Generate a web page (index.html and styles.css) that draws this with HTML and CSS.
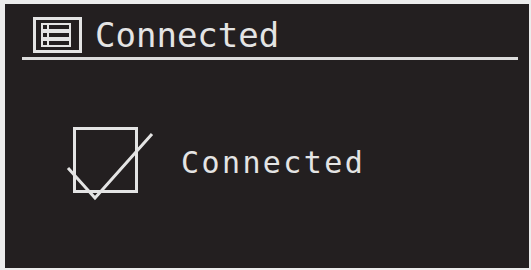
FILE: index.html
```html
<!DOCTYPE html>
<html>
<head>
<meta charset="utf-8">
<link rel="stylesheet" href="styles.css">
</head>
<body>
<div class="screen">
  <div class="header">
    <svg class="menu-icon" width="50" height="36" viewBox="0 0 50 36">
      <rect x="1.5" y="1.5" width="46" height="33" fill="none" stroke="#e4e4e4" stroke-width="3"/>
      <rect x="8" y="6" width="30" height="24" fill="#e4e4e4"/>
      <g fill="#231f20">
        <rect x="10" y="8" width="4" height="4"/>
        <rect x="16" y="8" width="20" height="4"/>
        <rect x="10" y="16" width="4" height="4"/>
        <rect x="16" y="16" width="20" height="4"/>
        <rect x="10" y="24" width="4" height="4"/>
        <rect x="16" y="24" width="20" height="4"/>
      </g>
    </svg>
    <span class="title">Connected</span>
  </div>
  <div class="divider"></div>
  <div class="content">
    <svg class="check-icon" width="90" height="76" viewBox="0 0 90 76">
      <rect x="9.5" y="3.5" width="62" height="63" fill="none" stroke="#e4e4e4" stroke-width="3"/>
      <polyline points="3,43 30,73 87,9" fill="none" stroke="#e4e4e4" stroke-width="3"/>
    </svg>
    <span class="status">Connected</span>
  </div>
</div>
</body>
</html>
```
FILE: styles.css
```css
html, body {
  margin: 0;
  padding: 0;
}
body {
  width: 531px;
  height: 270px;
  background: #ececec;
  overflow: hidden;
}
.screen {
  margin: 4px 0 0 5px;
  width: 524px;
  height: 264px;
  background: #231f20;
  padding-top: 13px;
  box-sizing: border-box;
  color: #e4e4e4;
  font-family: "DejaVu Sans Mono", monospace;
}
.header {
  display: flex;
  align-items: center;
  padding-left: 28px;
  height: 36px;
}
.menu-icon {
  flex: none;
}
.title {
  margin-left: 12px;
  font-size: 34px;
  line-height: 36px;
}
.divider {
  margin: 4px 11px 0 17px;
  height: 3px;
  background: #dcdcdc;
}
.content {
  display: flex;
  align-items: center;
  padding-left: 60px;
  margin-top: 65px;
}
.check-icon {
  flex: none;
}
.status {
  margin-left: 26px;
  font-size: 30px;
  letter-spacing: 2.4px;
  line-height: 36px;
}
```
